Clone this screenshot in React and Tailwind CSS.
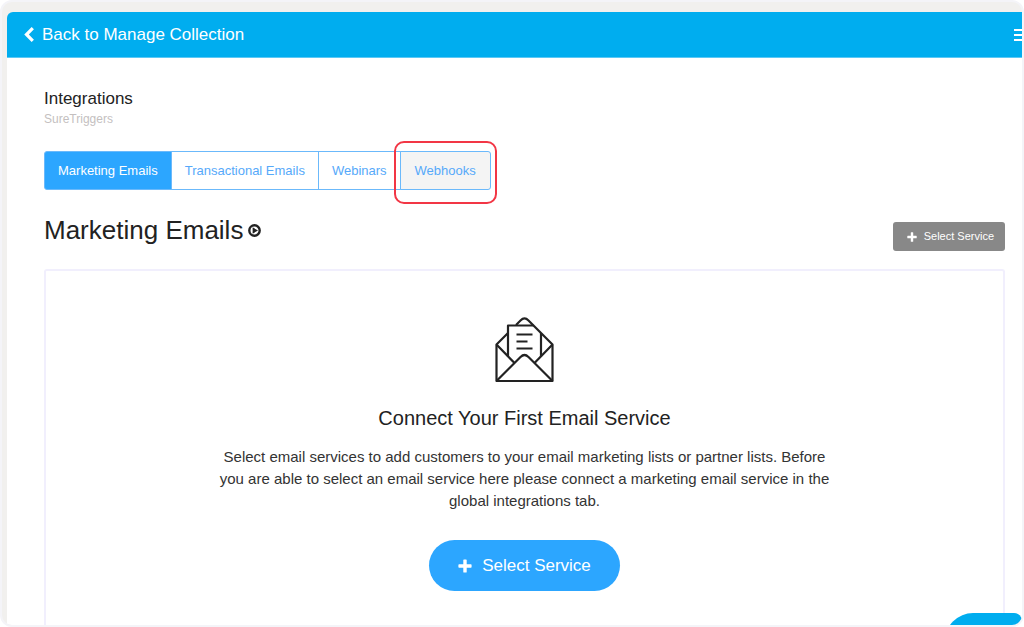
import { useState } from "react";

const TABS = ["Marketing Emails", "Transactional Emails", "Webinars", "Webhooks"];

const ChevronIcon = () => (
  <svg viewBox="0 0 10 15" className="w-[10px] h-[15px]" fill="none" stroke="currentColor" strokeWidth="3.2">
    <path d="M8.800 1.200 2.500 7.500l6.300 6.300" />
  </svg>
);

const PlusIcon = ({ size }) => (
  <svg viewBox="0 0 14 14" width={size} height={size} fill="currentColor">
    <path d="M6 .4h2q.7 0 .7.7v4.200h4.200q.7 0 .7.7v2q0 .7-.7.7H8.700v4.200q0 .7-.7.7H6q-.7 0-.7-.7V8.700H1.100q-.7 0-.7-.7V6q0-.7.7-.7h4.200V1.100q0-.7.7-.7z" />
  </svg>
);

const PlayIcon = () => (
  <svg viewBox="0 0 14 14" className="w-[13px] h-[13px]">
    <circle cx="7" cy="7" r="5.600" fill="none" stroke="#222" strokeWidth="2.600" />
    <path d="M5 3.600 10.800 7 5 10.400z" fill="#222" />
  </svg>
);

const EnvelopeIcon = () => (
  <svg viewBox="0 0 60 66" className="w-[60px] h-[66px]" fill="none" stroke="#222" strokeWidth="2.200" strokeLinejoin="round">
    <path d="M13 16 1.500 27.500V64h56V27.500L33.500 3.500q-4-4-8 0L21 8" />
    <path d="M19.500 46 1.500 27.500M39.500 46l18-18.500" />
    <path d="M1.500 64 25.500 40q4-4 8 0l24 24" />
    <path d="M13 39.500V8.500h25.500M46 16v23.500" />
    <path d="M21.500 17.500h16M21.500 24.500h11M21.500 31.500h16" />
  </svg>
);

const App = () => {
  const [activeTab, setActiveTab] = useState("Marketing Emails");

  return (
    <div className="h-screen bg-white font-['Liberation_Sans',Arial,sans-serif] text-[#222]">
      <div className="relative flex h-full flex-col overflow-hidden rounded-xl border-2 border-[#f4f4f8] bg-[#f1f0ee] pt-[10px] pl-[5px]">
        {/* Top bar */}
        <header className="flex h-[46px] shrink-0 items-center justify-between overflow-hidden rounded-tl-md border-b border-[#5cc8f5] bg-[#00adef] pl-[17px] text-white">
          <a href="#collection" className="flex items-center gap-2 text-[17px]">
            <ChevronIcon />
            Back to Manage Collection
          </a>
          <button aria-label="Menu" className="flex w-2 flex-col gap-[3px] overflow-hidden">
            <span className="h-[2px] w-4 bg-white" />
            <span className="h-[2px] w-4 bg-white" />
            <span className="h-[2px] w-4 bg-white" />
          </button>
        </header>

        <main className="flex min-h-0 flex-1 flex-col bg-white pt-[30px] pr-[17px] pl-[37px]">
          <h1 className="text-[17px] leading-[22px]">Integrations</h1>
          <p className="text-xs leading-[18px] text-[#c4bfbf]">SureTriggers</p>

          {/* Tabs */}
          <nav className="mt-[23px] flex">
            {TABS.map((tab) => (
              <div key={tab} className="group relative -ml-px first:ml-0">
                <button
                  onClick={() => setActiveTab(tab)}
                  className={`h-[39px] border border-[#6bb9fb] px-[13px] text-[13px] group-first:rounded-l-[3px] group-last:rounded-r-[3px] group-last:px-[14px] ${
                    tab === activeTab ? "bg-[#2ca6ff] text-white" : "bg-white text-[#56a9fa] group-last:bg-[#f4f4f4]"
                  }`}
                >
                  {tab}
                </button>
                {tab === "Webhooks" && (
                  <span className="pointer-events-none absolute -inset-x-[6px] -top-[10px] -bottom-[14px] rounded-[10px] border-2 border-[#f23645]" />
                )}
              </div>
            ))}
          </nav>

          <div className="mt-[22px] flex items-start justify-between">
            <h2 className="flex items-center gap-[5px] text-[26px] leading-[36px]">
              Marketing Emails
              <PlayIcon />
            </h2>
            <button className="mt-[10px] flex h-[29px] items-center gap-[7px] rounded-[3px] bg-[#888] pr-[11px] pl-[14px] text-[11px] text-white">
              <PlusIcon size={10} />
              Select Service
            </button>
          </div>

          {/* Empty state */}
          <section className="mt-[18px] flex flex-1 flex-col items-center rounded-t-[3px] border-2 border-b-0 border-[#f1effd] px-4 pt-[46px]">
            <EnvelopeIcon />
            <h3 className="mt-[21px] text-[20px] leading-7">Connect Your First Email Service</h3>
            <p className="mt-[14px] max-w-[612px] text-center text-[15px] leading-[22px] text-[#333]">
              Select email services to add customers to your email marketing lists or partner lists. Before you are able to
              select an email service here please connect a marketing email service in the global integrations tab.
            </p>
            <button className="mt-7 flex h-[51px] shrink-0 items-center gap-[10px] rounded-full bg-[#2ca6ff] px-[29px] text-[17px] text-white">
              <PlusIcon size={14} />
              Select Service
            </button>
          </section>
        </main>

        {/* Help launcher peeking in from the bottom edge */}
        <button aria-label="Help" className="absolute right-0 -bottom-7 h-10 w-[77px] rounded-tl-[28px] rounded-tr-lg bg-[#00adef]" />
      </div>
    </div>
  );
};

export default App;
